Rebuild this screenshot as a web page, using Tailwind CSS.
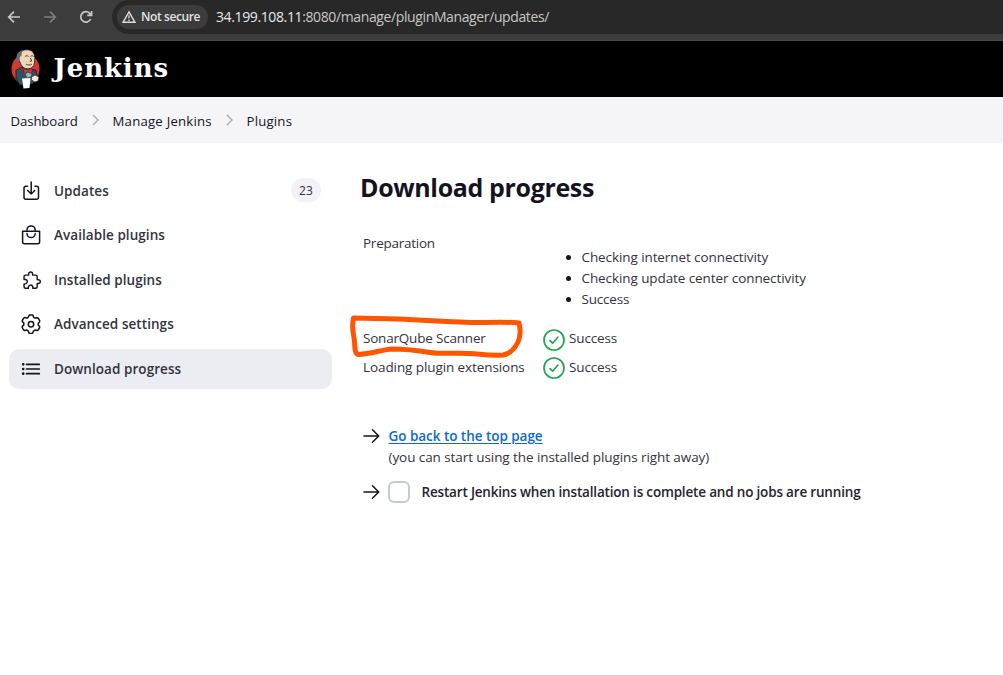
<!DOCTYPE html>
<html lang="en">
<head>
<meta charset="utf-8">
<title>Download progress [Jenkins]</title>
<script src="https://cdn.jsdelivr.net/npm/@tailwindcss/browser@4"></script>
</head>
<body class="h-[675px] overflow-hidden bg-white font-['Open_Sans','Noto_Sans',sans-serif] text-[14px] leading-[21px] text-[#14141f]">

<!-- Browser toolbar -->
<div class="flex h-[41px] items-start border-b border-[#4a4a4a] bg-[#3c3c3c]">
  <svg class="ml-[7px] mt-[10px] size-[14px] shrink-0" viewBox="0 0 14 14" fill="none" stroke="#c7c7c7" stroke-width="1.7"><path d="M13 7H2M7 1.7 1.7 7 7 12.3"/></svg>
  <svg class="ml-[22px] mt-[10px] size-[14px] shrink-0" viewBox="0 0 14 14" fill="none" stroke="#7d7d7d" stroke-width="1.7"><path d="M1 7h11M7 1.7 12.3 7 7 12.3"/></svg>
  <svg class="ml-[22px] mt-[10px] size-[14px] shrink-0" viewBox="0 0 14 14" fill="none" stroke="#c7c7c7" stroke-width="1.7"><path d="M11.7 9A5.2 5.2 0 1 1 10.7 3.3L12 4.6M12.6 1v4.4H8.2"/></svg>
  <div class="ml-[19px] flex h-[34px] flex-1 items-center rounded-l-[17px] bg-[#282828] pl-[5px]">
    <div class="flex h-[24px] w-[91px] items-center rounded-full bg-[#3c3c3c] pl-[5px]">
      <svg class="size-[14px] shrink-0" viewBox="0 0 14 14"><path d="M7 1.8 13 12.3H1Z" fill="none" stroke="#dedede" stroke-width="1.4"/><path d="M7 5.2v3.4M7 9.5v1.4" stroke="#dedede" stroke-width="1.3"/></svg>
      <span class="ml-[5px] -mt-[1px] whitespace-nowrap text-[12px] font-semibold tracking-[-0.4px] text-[#e3e3e3]">Not secure</span>
    </div>
    <div class="ml-[8px] -mt-[1px] whitespace-nowrap text-[14px] tracking-[-0.38px] text-[#c7c7c7]"><span class="text-[#e8e8e8]">34.199.108.11</span>:8080/manage/pluginManager/updates/</div>
  </div>
</div>

<!-- Jenkins header -->
<header class="flex h-[56px] items-start bg-black">
  <svg class="ml-[10px] mt-[7px] h-[42px] w-[31px] shrink-0" viewBox="0 0 31 42">
    <ellipse cx="15.500" cy="21" rx="14" ry="15" fill="#d33833"/>
    <path d="M6 22 12 19l7 2 7 1 1.500 8-4 5-5 2H10L6 31Z" fill="#335061" stroke="#111e27" stroke-width=".8"/>
    <path d="M8 10C8 4 13 1.500 18 1.800c5.500.6 7 5 6.700 9.500 0 5-1 8.500-5.700 9.400-5 .5-8-2.500-9-7-2 0-2.500-2-2-3.700Z" fill="#f0d6b7" stroke="#231f20" stroke-width=".8"/>
    <path d="M6.500 11C6 6 9 2.500 14 1.800 11.500 4 11.500 6 11.500 8c-1.500 0-2.300 1.500-1.500 5C8 14 6.500 13 6.500 11Z" fill="#6d6b6d"/>
    <path d="M15 8.500c1-1 2.500-1 3.500 0M20.500 8.500c1-1 2-1 3 0M20.500 10l1.200 3-2 .5M16 16c2 1.500 4 1.500 6 0" fill="none" stroke="#231f20" stroke-width=".8"/>
    <path d="m13.500 20.500 3.500 1.500 5-1.500v5.500l-4-2-4 2Z" fill="#d33833" stroke="#81191a" stroke-width=".6"/>
    <path d="m15 26 3-2 4 2-1 3-4 1Z" fill="#8db4c6" stroke="#111e27" stroke-width=".5"/>
    <path d="m12 30.500 8.500-.5-1 10-6 .6Z" fill="#fff"/>
    <path d="m21.500 29 3.500-2 4 2-1 4-3 1-3.500-2Z" fill="#f3e5e3" stroke="#231f20" stroke-width=".6"/>
  </svg>
  <span class="ml-[12.500px] mt-[10px] font-['DejaVu_Serif',serif] text-[26px] font-bold leading-[34px] tracking-[0.9px] text-white">Jenkins</span>
</header>

<!-- Breadcrumbs -->
<nav class="flex h-[46px] items-center bg-[#f5f5f8] pl-[10.500px] pt-[2px] text-[13.200px] font-medium">
  <span class="w-[67px] whitespace-nowrap tracking-[-0.1px]">Dashboard</span>
  <svg class="ml-[14px] mr-[14px] -mt-[3px] h-[12px] w-[7px]" viewBox="0 0 7 12" fill="none" stroke="#a9a9b8" stroke-width="1.4"><path d="m1 1 5 5-5 5"/></svg>
  <span class="w-[99px] whitespace-nowrap tracking-[0.22px]">Manage Jenkins</span>
  <svg class="ml-[14px] mr-[14px] -mt-[3px] h-[12px] w-[7px]" viewBox="0 0 7 12" fill="none" stroke="#a9a9b8" stroke-width="1.4"><path d="m1 1 5 5-5 5"/></svg>
  <span class="whitespace-nowrap tracking-[0.2px]">Plugins</span>
</nav>

<div class="flex">
  <!-- Side panel -->
  <aside class="flex w-[332px] shrink-0 flex-col gap-[4.5px] pl-[9px] pt-[28px] text-[13.5px] font-semibold tracking-[0.06px] text-[#333340]">
    <div class="flex h-[40px] items-center pb-[2px] pl-[12px] pr-[11px]">
      <svg class="mt-[1px] size-[20px]" viewBox="0 0 20 20" fill="none" stroke="#14141f" stroke-width="1.5" stroke-linecap="round" stroke-linejoin="round"><path d="M6.500 5.200H5A2 2 0 0 0 3 7.200v9a2 2 0 0 0 2 2h10.500a2 2 0 0 0 2-2v-9a2 2 0 0 0-2-2H14M10.200 1v12M6.700 9.500l3.500 3.500 3.500-3.500"/></svg>
      <span class="ml-[13px] mt-[2px]">Updates</span>
      <span class="ml-auto flex h-[24px] w-[30px] items-center justify-center rounded-full bg-[#f2f2f8] text-[12px] font-medium">23</span>
    </div>
    <div class="flex h-[40px] items-center pl-[12px]">
      <svg class="-mt-[1px] size-[20px]" viewBox="0 0 20 20" fill="none" stroke="#14141f" stroke-width="1.5" stroke-linecap="round" stroke-linejoin="round"><path d="M1.600 6.200h17v10.600a2 2 0 0 1-2 2h-13a2 2 0 0 1-2-2ZM6 6V5a4.100 4.100 0 0 1 8.200 0v1M6 8.500a4.100 4.100 0 0 0 8.200 0"/></svg>
      <span class="ml-[13px]">Available plugins</span>
    </div>
    <div class="flex h-[40px] items-center pl-[12px]">
      <svg class="size-[20px]" viewBox="0 0 512 512" fill="none" stroke="#14141f" stroke-width="36" stroke-linejoin="round"><path transform="translate(30 2)" d="M413.660 246.100H386a2 2 0 01-2-2v-77.240A38.860 38.860 0 00345.140 128H267.900a2 2 0 01-2-2V98.340c0-27.140-21.500-49.860-48.640-50.330a49.530 49.530 0 00-50.400 49.510V126a2 2 0 01-2 2H87.620A39.740 39.740 0 0048 167.620V238a2 2 0 002 2h26.910c29.370 0 53.680 25.480 54.090 54.850.42 29.870-23.510 57.150-53.290 57.150H50a2 2 0 00-2 2v70.380A39.740 39.740 0 0087.620 464H158a2 2 0 002-2v-20.930c0-30.280 24.750-56.350 55-57.060 30.100-.7 57 20.310 57 50.280V462a2 2 0 002 2h71.140A38.860 38.860 0 00384 425.140v-78a2 2 0 012-2h28.480c27.630 0 49.520-22.670 49.520-50.400s-23.200-48.640-50.340-48.640z"/></svg>
      <span class="ml-[13px]">Installed plugins</span>
    </div>
    <div class="flex h-[40px] items-center pl-[12px]">
      <svg class="-mt-[2px] size-[20px]" viewBox="0 0 20 20" fill="none" stroke="#14141f" stroke-width="1.500" stroke-linejoin="round"><path d="M8.200 1.100h3.600l.8 2.200 1.400.8 2.400-.4 1.100.9 1.300 2.300-.3 1-1.300 1.500v1.500l1.400 1.600.1 1-1.600 2.600-1 .5-2.100-.5-1.400.8-.9 2.100-1 .6H9.200l-1.200-.5-.7-2.100-1.500-.9-2.200.5-1-.6-1.400-2.500.1-1.100 1.500-1.500V9.100L1.300 7.500l0-1L2.700 4.200l1-.6 2.200.5 1.300-.8Z"/><circle cx="10" cy="10.200" r="2.700"/></svg>
      <span class="ml-[13px]">Advanced settings</span>
    </div>
    <div class="flex h-[40px] items-center rounded-[10px] bg-[#ecedf3] pl-[12px]">
      <svg class="size-[20px]" viewBox="0 0 20 20" fill="none" stroke="#14141f" stroke-width="1.700" stroke-linecap="round"><path d="M5.500 5.300H18.300M5.500 10H18.300M5.500 14.700H18.300"/><path stroke-width="2.700" d="M2.200 5.300h.01M2.200 10h.01M2.200 14.700h.01"/></svg>
      <span class="ml-[13px]">Download progress</span>
    </div>
  </aside>

  <!-- Progress -->
  <main class="pl-[28px] pt-[27px]">
    <h1 class="whitespace-nowrap text-[25px] font-bold leading-[34px] tracking-[-0.36px]">Download progress</h1>
    <div class="relative mt-[29px] pl-[3px] text-[13.500px] tracking-[-0.09px] text-[#333340]">
      <div class="flex">
        <div class="w-[180px] tracking-[-0.25px]">Preparation</div>
        <ul class="mt-[14px] list-disc pl-[38.500px] marker:text-[#14141f]">
          <li>Checking internet connectivity</li>
          <li>Checking update center connectivity</li>
          <li class="tracking-[-0.2px]">Success</li>
        </ul>
      </div>
      <div class="mt-[15px] flex h-[29px] items-center">
        <div class="-mt-[3px] w-[180px] tracking-[-0.2px]">SonarQube Scanner</div>
        <svg class="size-[22px]" viewBox="0 0 22 22" fill="none" stroke="#1ea64b" stroke-width="1.700" stroke-linecap="round" stroke-linejoin="round"><circle cx="11" cy="11" r="10"/><path d="m7 11.600 2.600 2.600 5.200-6"/></svg>
        <div class="-mt-[3px] ml-[4px] tracking-[-0.15px]">Success</div>
      </div>
      <div class="flex h-[28px] items-center">
        <div class="-mt-[1px] w-[180px]">Loading plugin extensions</div>
        <svg class="size-[22px]" viewBox="0 0 22 22" fill="none" stroke="#1ea64b" stroke-width="1.700" stroke-linecap="round" stroke-linejoin="round"><circle cx="11" cy="11" r="10"/><path d="m7 11.600 2.600 2.600 5.200-6"/></svg>
        <div class="-mt-[1px] ml-[4px] tracking-[-0.15px]">Success</div>
      </div>
      <!-- Hand-drawn highlight -->
      <svg class="absolute -left-[12px] top-[79px] h-[46px] w-[180px]" viewBox="348 312 180 46" fill="none" stroke="#ff5500" stroke-width="5" stroke-linecap="round" stroke-linejoin="round"><path d="M353.500 318 398 319C430 320 455 323 485 322.500 500 322 510 322 519 323 521 330 520 338 518 342 514 350 510 354 503 355 490 356 480 354 470 353.500 450 353 440 354 430 352.500 415 350 405 349 392 349 380 350 372 354 358 354.500 355 353 355 350 354.500 342 354 334 351 328 353.500 318Z"/></svg>
    </div>
    <div class="mt-[44px] flex pl-[3px]">
      <svg class="mt-[2px] h-[16px] w-[17px]" viewBox="0 0 17 16" fill="none" stroke="#14141f" stroke-width="1.500" stroke-linecap="round" stroke-linejoin="round"><path d="M1 8h14.500M9.500 1.800 15.700 8l-6.200 6.200"/></svg>
      <div class="ml-[8.500px] text-[13.500px] tracking-[-0.08px]">
        <a class="font-semibold text-[#0b6ad6] underline tracking-[-0.04px] underline-offset-2">Go back to the top page</a>
        <div class="text-[#333340]">(you can start using the installed plugins right away)</div>
      </div>
    </div>
    <div class="mt-[13px] flex items-center pl-[3px]">
      <svg class="h-[16px] w-[17px]" viewBox="0 0 17 16" fill="none" stroke="#14141f" stroke-width="1.500" stroke-linecap="round" stroke-linejoin="round"><path d="M1 8h14.500M9.500 1.800 15.700 8l-6.200 6.200"/></svg>
      <span class="ml-[8px] size-[22px] rounded-[6px] border-2 border-[#c3ccd1]"></span>
      <span class="ml-[11.500px] text-[13.500px] font-semibold tracking-[-0.18px] text-[#24242f]">Restart Jenkins when installation is complete and no jobs are running</span>
    </div>
  </main>
</div>
</body>
</html>
